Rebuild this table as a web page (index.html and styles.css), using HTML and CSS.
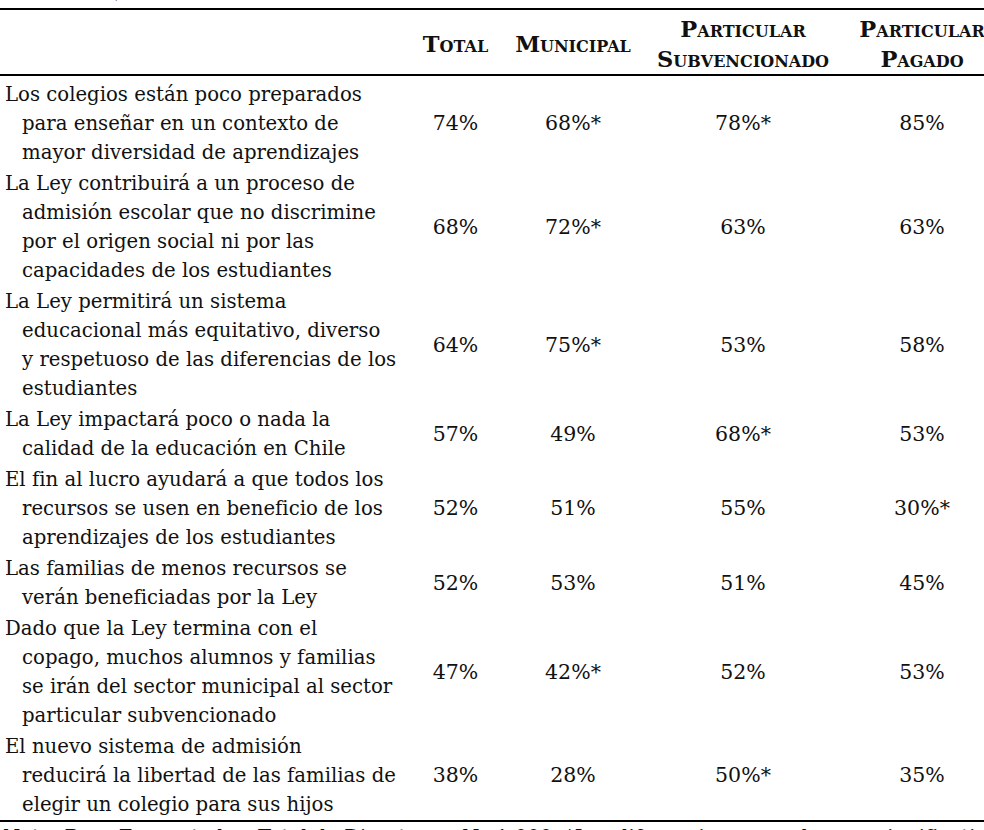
FILE: index.html
```html
<!DOCTYPE html>
<html lang="es">
<head>
<meta charset="utf-8">
<title>Opinión de directores</title>
<link rel="stylesheet" href="styles.css">
</head>
<body>
<p class="caption">Total,</p>
<table class="data">
  <colgroup>
    <col class="c-label">
    <col class="c-total">
    <col class="c-muni">
    <col class="c-subv">
    <col class="c-pag">
  </colgroup>
  <thead>
    <tr>
      <th class="label"></th>
      <th>Total</th>
      <th>Municipal</th>
      <th>Particular<br>Subvencionado</th>
      <th>Particular<br>Pagado</th>
    </tr>
  </thead>
  <tbody>
    <tr><td class="label">Los colegios están poco preparados<br>para enseñar en un contexto de<br>mayor diversidad de aprendizajes</td><td>74%</td><td>68%*</td><td>78%*</td><td>85%</td></tr>
    <tr><td class="label">La Ley contribuirá a un proceso de<br>admisión escolar que no discrimine<br>por el origen social ni por las<br>capacidades de los estudiantes</td><td>68%</td><td>72%*</td><td>63%</td><td>63%</td></tr>
    <tr><td class="label">La Ley permitirá un sistema<br>educacional más equitativo, diverso<br>y respetuoso de las diferencias de los<br>estudiantes</td><td>64%</td><td>75%*</td><td>53%</td><td>58%</td></tr>
    <tr><td class="label">La Ley impactará poco o nada la<br>calidad de la educación en Chile</td><td>57%</td><td>49%</td><td>68%*</td><td>53%</td></tr>
    <tr><td class="label">El fin al lucro ayudará a que todos los<br>recursos se usen en beneficio de los<br>aprendizajes de los estudiantes</td><td>52%</td><td>51%</td><td>55%</td><td>30%*</td></tr>
    <tr><td class="label">Las familias de menos recursos se<br>verán beneficiadas por la Ley</td><td>52%</td><td>53%</td><td>51%</td><td>45%</td></tr>
    <tr><td class="label">Dado que la Ley termina con el<br>copago, muchos alumnos y familias<br>se irán del sector municipal al sector<br>particular subvencionado</td><td>47%</td><td>42%*</td><td>52%</td><td>53%</td></tr>
    <tr><td class="label">El nuevo sistema de admisión<br>reducirá la libertad de las familias de<br>elegir un colegio para sus hijos</td><td>38%</td><td>28%</td><td>50%*</td><td>35%</td></tr>
  </tbody>
</table>
<p class="note">Nota: Base Encuestados. Total de Directores: N=1.000. *Las diferencias marcadas son significativas.</p>
</body>
</html>
```
FILE: styles.css
```css
html, body {
  margin: 0;
  padding: 0;
  overflow: hidden;
  background: #fff;
}
body {
  font-family: "DejaVu Serif", "Liberation Serif", serif;
  font-size: 19.7px;
  color: #111;
  width: 984px;
  height: 830px;
}
.caption {
  margin: -24px 0 2px 0;
  padding-left: 67px;
  height: 30px;
  line-height: 30px;
  font-size: 19px;
}
.data {
  border-collapse: collapse;
  table-layout: fixed;
  width: 1001px;
  border-top: 2px solid #000;
  border-bottom: 2px solid #000;
}
.c-label { width: 408px; }
.c-total { width: 95px; }
.c-muni { width: 140px; }
.c-subv { width: 200px; }
.c-pag { width: 158px; }

.data thead th {
  font-weight: bold;
  font-variant: small-caps;
  font-size: 22.5px;
  text-align: center;
  vertical-align: middle;
  line-height: 30px;
  padding: 4px 0 0;
  border-bottom: 2px solid #000;
  white-space: nowrap;
}
.data td {
  font-size: 20.5px;
  line-height: 29px;
  padding: 1px 0;
  text-align: center;
  vertical-align: middle;
  white-space: nowrap;
}
.data tbody tr:first-child td { padding-top: 4px; }
.data td.label {
  font-size: 19.7px;
  text-align: left;
  padding-left: 22px;
  padding-right: 0;
  text-indent: -17px;
  white-space: normal;
}
.note {
  margin: 4px 0 0;
  padding-left: 3px;
  line-height: 24px;
  white-space: nowrap;
}
```
